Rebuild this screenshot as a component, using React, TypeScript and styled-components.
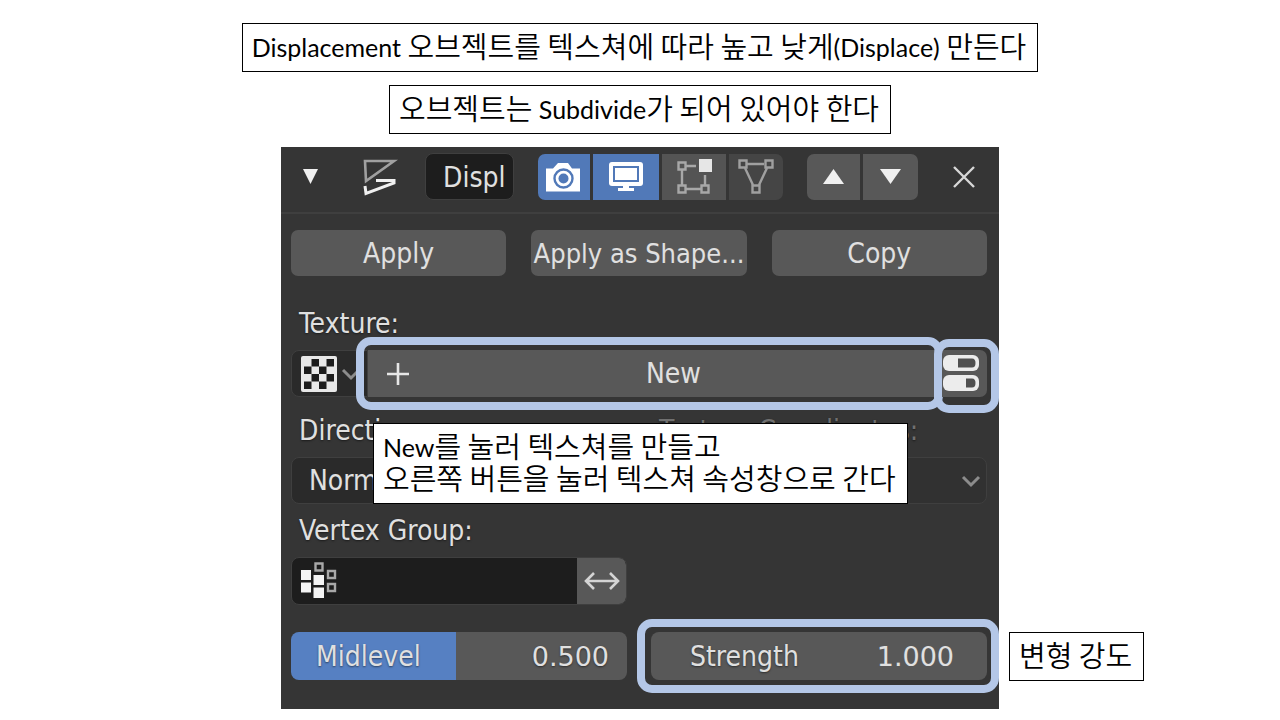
import React from "react";
import styled, { createGlobalStyle, css } from "styled-components";

const c = {
  panel: "#353535",
  button: "#585858",
  line: "#3f3f3f",
  dark: "#2a2a2a",
  field: "#1d1d1d",
  blue: "#5680c2",
  toggle: "#5179b8",
  text: "#e0e0e0",
  icon: "#d8d8d8",
  ring: "#b4c7e7",
};

const GlobalStyle = createGlobalStyle`
  *, *::before, *::after { box-sizing: border-box; }
  body { margin: 0; background: #fff; }
  button, input, select { font: inherit; color: inherit; margin: 0; border: 0; padding: 0; }
  svg { display: block; flex: none; }
`;

const Page = styled.main`
  display: flex;
  flex-direction: column;
  align-items: center;
  padding: 23px 0 11px;
`;

const Note = styled.p`
  margin: 0;
  padding: 5px 11px 10px 9px;
  border: 1px solid #000;
  background: #fff;
  color: #000;
  font: 350 29px/32px "Noto Sans CJK KR", sans-serif;
  white-space: nowrap;
`;

const Latin = styled.span`
  font-family: Lato, sans-serif;
  font-weight: 400;
  font-size: 25px;
  line-height: 24px;
  vertical-align: 1px;
`;

const Heading = styled(Note)`
  margin-bottom: 13px;
`;

const Stage = styled.div`
  display: grid;
  grid-template-columns: minmax(max-content, 1fr) minmax(0, 718px) minmax(max-content, 1fr);
  width: 100%;
`;

const SideNote = styled(Note)`
  grid-column: 3;
  place-self: end start;
  margin: 0 0 28px 10px;
`;

const Panel = styled.section`
  grid-column: 2;
  padding-bottom: 29px;
  background: ${c.panel};
  color: ${c.text};
  font: 28px/32px "DejaVu Sans Condensed", "DejaVu Sans", sans-serif;
  text-shadow: 0 1px 2px rgba(0, 0, 0, 0.5);
`;

const Header = styled.header`
  display: flex;
  align-items: center;
  height: 67px;
  padding: 0 12px 6px 16px;
  border-bottom: 2px solid ${c.line};
`;

const IconButton = styled.button`
  display: flex;
  align-items: center;
  justify-content: center;
  width: 26px;
  height: 46px;
  background: none;
  color: ${c.icon};
`;

const ModifierIcon = styled.span`
  margin: 0 27px 0 39px;
`;

const NameInput = styled.input`
  width: 89px;
  height: 47px;
  padding: 2px 8px 0 17px !important;
  border: 1px solid ${c.line} !important;
  border-radius: 8px;
  background: ${c.field};
`;

const Group = styled.div`
  display: flex;
  gap: 3px;
  margin-left: 24px;
`;

const GroupButton = styled.button<{ $w: number; $bg?: string }>`
  display: flex;
  align-items: center;
  justify-content: center;
  width: ${(p) => p.$w}px;
  height: 46px;
  background: ${(p) => p.$bg ?? c.button};
  &:first-child { border-radius: 7px 0 0 7px; }
  &:last-child { border-radius: 0 7px 7px 0; }
`;

const CloseButton = styled(IconButton)`
  margin-left: auto;
  margin-right: 10px;
`;

const Body = styled.div`
  padding: 16px 12px 0 10px;
`;

const Actions = styled.div`
  display: grid;
  grid-template-columns: repeat(3, minmax(0, 1fr));
  gap: 25px;
  margin-bottom: 24px;
`;

const Action = styled.button<{ $long?: boolean }>`
  height: 46px;
  padding-top: 2px !important;
  border-radius: 7px;
  background: ${c.button};
  font-size: ${(p) => (p.$long ? 27 : 28)}px;
  white-space: nowrap;
`;

const Label = styled.label<{ $dim?: boolean }>`
  display: flex;
  align-items: center;
  height: 50px;
  padding: 0 8px 2px;
  color: ${(p) => (p.$dim ? "#707070" : c.text)};
  white-space: nowrap;
`;

const TextureRow = styled.div`
  display: flex;
  height: 47px;
  margin-bottom: 10px;
`;

const TextureType = styled.button`
  display: flex;
  align-items: center;
  gap: 4px;
  width: 77px;
  padding-left: 9px !important;
  border: 1px solid ${c.line} !important;
  border-radius: 8px 0 0 8px;
  background: ${c.dark};
`;

const ringed = css<{ $ring: string }>`
  position: relative;
  &::after {
    content: "";
    position: absolute;
    inset: ${(p) => p.$ring};
    border: 8px solid ${c.ring};
    border-radius: 15px;
    pointer-events: none;
  }
`;

const NewButton = styled.button<{ $ring: string }>`
  ${ringed}
  flex: 1;
  display: grid;
  grid-template-columns: 22px 1fr;
  align-items: center;
  padding: 0 0 0 19px !important;
  background: ${c.button};
`;

const PropsButton = styled.button<{ $ring: string }>`
  ${ringed}
  display: flex;
  align-items: center;
  width: 49px;
  padding-left: 5px !important;
  border-radius: 0 7px 7px 0;
  background: ${c.button};
`;

const Pair = styled.div`
  position: relative;
  display: grid;
  grid-template-columns: repeat(2, minmax(0, 1fr));
  column-gap: 24px;
`;

const SelectWrap = styled.div`
  display: grid;
  align-items: center;
  & > * { grid-area: 1 / 1; }
  & > svg { justify-self: end; margin-right: 6px; pointer-events: none; }
`;

const Select = styled.select`
  appearance: none;
  width: 100%;
  height: 47px;
  padding: 0 17px !important;
  border: 1px solid ${c.line} !important;
  border-radius: 8px;
  background: ${c.dark};
  &:disabled { opacity: 1; color: #5c5c5c; background: #313131; }
`;

const Tip = styled(Note)`
  position: absolute;
  top: 16px;
  left: 82px;
  text-shadow: none;
`;

const VertexGroup = styled(Pair)`
  margin-top: 3px;
`;

const VertexField = styled.div`
  display: flex;
  align-items: center;
  height: 48px;
  border: 1px solid ${c.line};
  border-radius: 8px;
  overflow: hidden;
  background: ${c.field};
  padding-left: 9px;
`;

const VertexInput = styled.input`
  flex: 1;
  min-width: 0;
  height: 46px;
  background: transparent;
`;

const InvertButton = styled(GroupButton)`
  height: 48px;
`;

const Values = styled(Pair)`
  margin-top: 27px;
`;

const Slider = styled.div`
  display: grid;
  align-items: center;
  & > * { grid-area: 1 / 1; }
`;

const Range = styled.input<{ $fill: number }>`
  appearance: none;
  width: 100%;
  height: 48px;
  border-radius: 8px;
  background: linear-gradient(to right, ${c.blue} ${(p) => p.$fill}%, ${c.button} 0);
  &::-webkit-slider-thumb { appearance: none; width: 1px; height: 48px; }
`;

const SliderText = styled.div`
  display: flex;
  justify-content: space-between;
  padding: 2px 18px 0 25px;
  pointer-events: none;
`;

const Digits = styled.output`
  font-family: "DejaVu Sans", sans-serif;
  font-size: 27px;
`;

const NumberField = styled.div<{ $ring: string }>`
  ${ringed}
  display: flex;
  align-items: center;
  height: 48px;
  padding: 2px 33px 0 39px;
  border-radius: 8px;
  background: ${c.button};
`;

const NumberInput = styled.input`
  flex: 1;
  min-width: 0;
  background: transparent;
  text-align: right;
  font-family: "DejaVu Sans", sans-serif;
  font-size: 27px;
`;

const Triangle = ({ w, up }: { w: number; up?: boolean }) => (
  <svg width={w} height="15" viewBox={`0 0 ${w} 15`} fill="#f0f0f0">
    <path d={up ? `M0 15H${w}L${w / 2} 0Z` : `M0 0H${w}L${w / 2} 15Z`} />
  </svg>
);

const Chevron = () => (
  <svg width="20" height="14" viewBox="0 0 20 14" fill="none" stroke="#8c8c8c" strokeWidth="3">
    <path d="M2 3L10 11L18 3" />
  </svg>
);

const DisplaceIcon = () => (
  <svg width="36" height="38" viewBox="0 0 36 38" fill="none" strokeWidth="2.6">
    <path d="M3 3H32L4 23Z" stroke="#a0a0a0" />
    <path d="M14 22.500H32V25L4 35.500L3 28" stroke="#f0f0f0" strokeWidth="3" />
  </svg>
);

const CameraIcon = () => (
  <svg width="36" height="32" viewBox="0 0 36 32">
    <path d="M0 7.500H7L12 2H22L26 7.500H34V30.500H0Z" fill="#fff" />
    <circle cx="17.500" cy="17.500" r="9" fill="none" stroke={c.toggle} strokeWidth="2.400" />
    <circle cx="17.500" cy="17.500" r="5" fill={c.toggle} />
  </svg>
);

const MonitorIcon = () => (
  <svg width="34" height="30" viewBox="0 0 34 30" fill="#fff">
    <rect width="34" height="24" rx="3" />
    <rect x="5" y="5" width="24" height="14" fill="#fff" stroke={c.toggle} strokeWidth="2" />
    <path d="M14 24H20V26H25V29H9V26H14Z" />
  </svg>
);

const EditIcon = () => (
  <svg width="37" height="37" viewBox="0 0 37 37" fill="none" stroke="#a8a8a8" strokeWidth="2.400">
    <path d="M10 8H20M6 12V27M10 31H25M29 17V27" />
    <path d="M2.500 4.500H9.500V11.500H2.500ZM2.500 27.500H9.500V34.500H2.500ZM25.500 27.500H32.500V34.500H25.500Z" />
    <rect x="23" y="1" width="13" height="13" fill="#e6e6e6" stroke="none" />
  </svg>
);

const CageIcon = () => (
  <svg width="38" height="37" viewBox="0 0 38 37" fill="none" stroke="#a0a0a0" strokeWidth="2.400">
    <path d="M10 6H27M8 10L16 27M30 10L22 27" />
    <path d="M2.500 2.500H9.500V9.500H2.500ZM28.500 2.500H35.500V9.500H28.500ZM15.500 27.500H22.500V34.500H15.500Z" />
  </svg>
);

const CloseIcon = () => (
  <svg width="24" height="24" viewBox="0 0 24 24" fill="none" stroke="currentColor" strokeWidth="2.400">
    <path d="M2 2L22 22M22 2L2 22" />
  </svg>
);

const CheckerIcon = () => (
  <svg width="36" height="36" viewBox="0 0 36 36">
    <rect width="36" height="36" rx="2" fill="#e8e8e8" />
    {[0, 1, 2, 3].flatMap((row) =>
      [0, 1].map((i) => (
        <rect
          key={`${row}-${i}`}
          x={3 + 7.5 * (2 * i + (row % 2 ? 0 : 1))}
          y={3 + 7.5 * row}
          width="7.500"
          height="7.500"
          fill="#1c1c1c"
        />
      ))
    )}
  </svg>
);

const PlusIcon = () => (
  <svg width="22" height="22" viewBox="0 0 22 22" fill="none" stroke="#e6e6e6" strokeWidth="2.600">
    <path d="M11 0V22M0 11H22" />
  </svg>
);

const PropsIcon = () => (
  <svg width="37" height="37" viewBox="0 0 37 37" fill="#ececec">
    <rect y="0" width="36" height="16" rx="6" />
    <rect y="20" width="36" height="16" rx="6" />
    <path d="M15 3.500H29Q32.500 3.500 32.500 8Q32.500 12.500 29 12.500H15Z" fill="#505050" />
    <path d="M23 23.500H29Q32.500 23.500 32.500 28Q32.500 32.500 29 32.500H23Z" fill="#505050" />
  </svg>
);

const VertexIcon = () => (
  <svg width="38" height="38" viewBox="0 0 38 38" fill="#f4f4f4">
    <path d="M0 8H10V18H0ZM0 20.500H10V30.500H0ZM12.500 13H23V23H12.500ZM12.500 25.500H23V36H12.500Z" />
    <path
      d="M14.500 1.500H21.500V8.500H14.500ZM27 9H34V16H27ZM27 22H34V29H27Z"
      fill="none"
      stroke="#a8a8a8"
      strokeWidth="2.400"
    />
  </svg>
);

const SwapIcon = () => (
  <svg width="36" height="20" viewBox="0 0 36 20" fill="none" stroke="#d4d4d4" strokeWidth="2.600">
    <path d="M2 10H34M10 2L2 10L10 18M26 2L34 10L26 18" />
  </svg>
);

export default function App() {
  return (
    <Page>
      <GlobalStyle />
      <Heading>
        <Latin>Displacement</Latin> 오브젝트를 텍스쳐에 따라 높고 낮게<Latin>(Displace)</Latin> 만든다
      </Heading>
      <Heading>
        오브젝트는 <Latin>Subdivide</Latin>가 되어 있어야 한다
      </Heading>
      <Stage>
        <Panel>
          <Header>
            <IconButton aria-label="Collapse">
              <Triangle w={15} />
            </IconButton>
            <ModifierIcon>
              <DisplaceIcon />
            </ModifierIcon>
            <NameInput aria-label="Modifier name" defaultValue="Displ" />
            <Group>
              <GroupButton $w={52} $bg={c.toggle} aria-label="Render">
                <CameraIcon />
              </GroupButton>
              <GroupButton $w={66} $bg={c.toggle} aria-label="Realtime">
                <MonitorIcon />
              </GroupButton>
              <GroupButton $w={64} $bg="#545454" aria-label="Edit mode">
                <EditIcon />
              </GroupButton>
              <GroupButton $w={54} $bg="#454545" aria-label="On cage">
                <CageIcon />
              </GroupButton>
            </Group>
            <Group>
              <GroupButton $w={53} aria-label="Move up">
                <Triangle w={21} up />
              </GroupButton>
              <GroupButton $w={55} aria-label="Move down">
                <Triangle w={21} />
              </GroupButton>
            </Group>
            <CloseButton aria-label="Remove">
              <CloseIcon />
            </CloseButton>
          </Header>
          <Body>
            <Actions>
              <Action>Apply</Action>
              <Action $long>Apply as Shape...</Action>
              <Action>Copy</Action>
            </Actions>
            <Label htmlFor="texture">Texture:</Label>
            <TextureRow>
              <TextureType aria-label="Browse texture">
                <CheckerIcon />
                <Chevron />
              </TextureType>
              <NewButton id="texture" $ring="-13px -5px -13px -12px">
                <PlusIcon />
                <span>New</span>
              </NewButton>
              <PropsButton $ring="-11px -12px -16px -4px" aria-label="Show texture properties">
                <PropsIcon />
              </PropsButton>
            </TextureRow>
            <Pair>
              <Label htmlFor="direction">Direction:</Label>
              <Label htmlFor="coords" $dim>
                Texture Coordinates:
              </Label>
              <SelectWrap>
                <Select id="direction">
                  <option>Normal</option>
                </Select>
                <Chevron />
              </SelectWrap>
              <SelectWrap>
                <Select id="coords" disabled>
                  <option>Local</option>
                </Select>
                <Chevron />
              </SelectWrap>
              <Tip>
                <Latin>New</Latin>를 눌러 텍스쳐를 만들고
                <br />
                오른쪽 버튼을 눌러 텍스쳐 속성창으로 간다
              </Tip>
            </Pair>
            <VertexGroup>
              <div>
                <Label htmlFor="vertex">Vertex Group:</Label>
                <VertexField>
                  <VertexIcon />
                  <VertexInput id="vertex" />
                  <InvertButton $w={49} aria-label="Invert">
                    <SwapIcon />
                  </InvertButton>
                </VertexField>
              </div>
            </VertexGroup>
            <Values>
              <Slider>
                <Range id="mid" type="range" min="0" max="1" step="0.001" defaultValue="0.5" $fill={49} />
                <SliderText>
                  <label htmlFor="mid">Midlevel</label>
                  <Digits htmlFor="mid">0.500</Digits>
                </SliderText>
              </Slider>
              <NumberField $ring="-13px -12px -13px -14px">
                <label htmlFor="strength">Strength</label>
                <NumberInput id="strength" defaultValue="1.000" />
              </NumberField>
            </Values>
          </Body>
        </Panel>
        <SideNote>변형 강도</SideNote>
      </Stage>
    </Page>
  );
}
